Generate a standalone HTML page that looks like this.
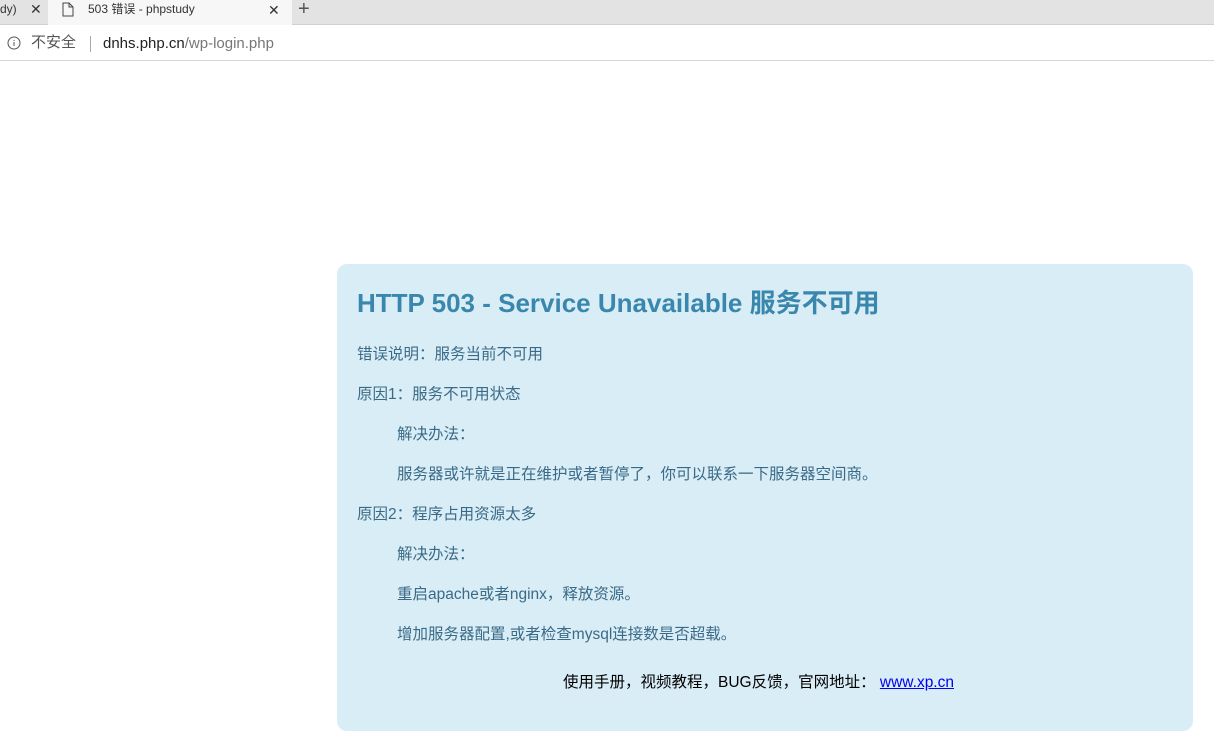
<!DOCTYPE html>
<html><head><meta charset="utf-8"><style>
*{margin:0;padding:0;box-sizing:border-box}
body{width:1214px;height:749px;overflow:hidden;background:#fff;font-family:"Liberation Sans","Noto Sans CJK SC",sans-serif;position:relative}
.tabs{position:absolute;left:0;top:0;width:1214px;height:25px;background:#e3e3e3;border-bottom:1px solid #d0d0d0}
.t{position:absolute;top:0;height:25px;font-size:12px;color:#333;line-height:18px}
.addr{position:absolute;top:25px;left:0;width:1214px;height:36px;background:#fff;border-bottom:1px solid #d6d6d6}
.box{position:absolute;left:337px;top:264px;width:856px;height:467px;background:#d9edf7;border-radius:10px;color:#3a6a86;font-size:15.5px}
.box p{position:absolute;left:20px;line-height:20px;white-space:nowrap;top:0}
.box p.i{left:60px}
h1{position:absolute;left:20px;top:19px;font-size:26px;color:#3a87ad;font-weight:bold;white-space:nowrap}
</style></head><body>
<div class="tabs">
<div class="t" style="left:0;width:48px;"><span style="position:absolute;left:0;top:0">dy)</span><span style="position:absolute;left:30px;top:0;font-size:14px">✕</span></div>
<div class="t" style="left:48px;width:244px;background:#f7f7f7;height:26px">
<svg style="position:absolute;left:14px;top:2px" width="12" height="15" viewBox="0 0 12 15"><path d="M1 1h6l4 4v9H1z M7 1v4h4" fill="none" stroke="#444" stroke-width="1"/></svg>
<span style="position:absolute;left:40px;top:0">503 错误 - phpstudy</span>
<span style="position:absolute;left:220px;top:1px;font-size:14px">✕</span></div>
<div class="t" style="left:298px;font-size:20px;color:#555;top:0">+</div>
</div>
<div class="addr">
<svg style="position:absolute;left:7px;top:11px" width="14" height="14" viewBox="0 0 14 14"><circle cx="7" cy="7" r="6" fill="none" stroke="#555"/><path d="M7 6v4M7 4v1" stroke="#555"/></svg>
<span style="position:absolute;left:31px;top:9px;font-size:15px;line-height:18px;color:#555">不安全</span>
<span style="position:absolute;left:90px;top:11px;width:1px;height:16px;background:#aaa"></span>
<span style="position:absolute;left:103px;top:10px;font-size:15px;color:#222">dnhs.php.cn<span style="color:#777">/wp-login.php</span></span>
</div>
<div class="box">
<h1>HTTP 503 - Service Unavailable 服务不可用</h1>
<p style="top:81px">错误说明：服务当前不可用</p>
<p style="top:121px">原因1：服务不可用状态</p>
<p class="i" style="top:161px">解决办法：</p>
<p class="i" style="top:201px">服务器或许就是正在维护或者暂停了，你可以联系一下服务器空间商。</p>
<p style="top:241px">原因2：程序占用资源太多</p>
<p class="i" style="top:281px">解决办法：</p>
<p class="i" style="top:321px">重启apache或者nginx，释放资源。</p>
<p class="i" style="top:361px">增加服务器配置,或者检查mysql连接数是否超载。</p>
<p style="top:409px;left:226px;color:#000">使用手册，视频教程，BUG反馈，官网地址： <span style="color:#00e;text-decoration:underline">www.xp.cn</span></p>
</div>
</body></html>
